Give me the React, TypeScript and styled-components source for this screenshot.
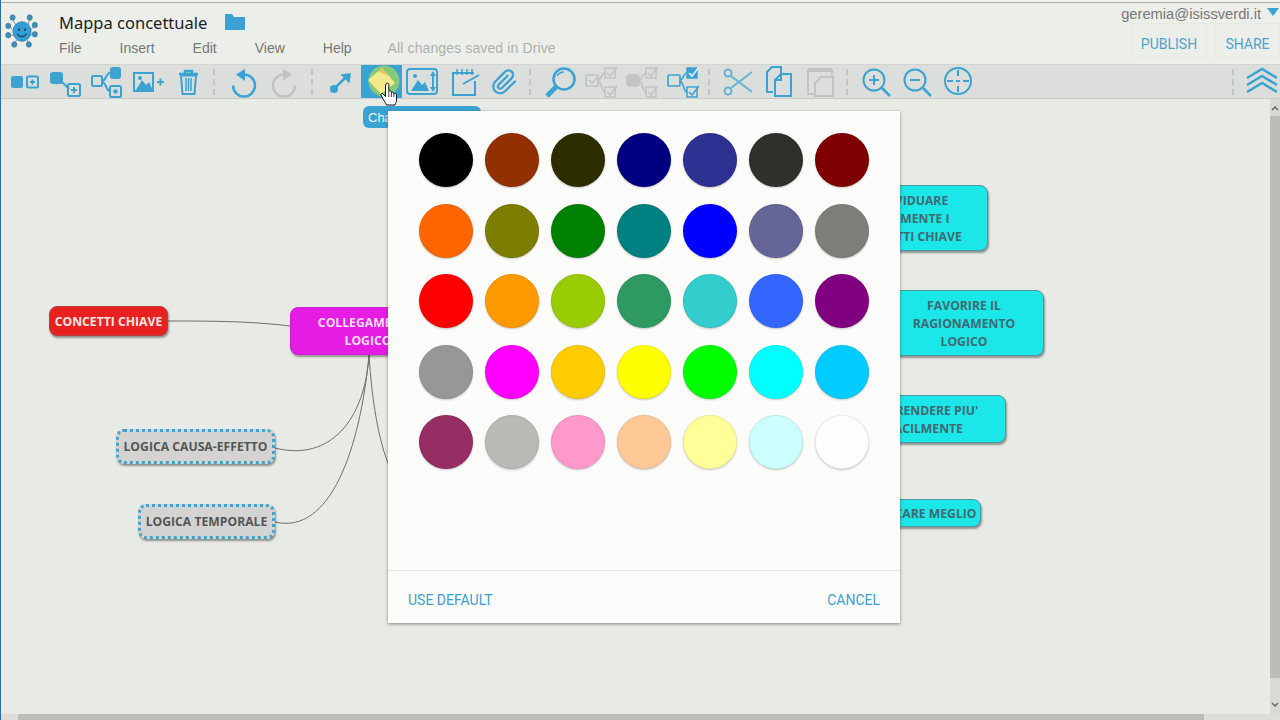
import React from 'react'
import styled, { createGlobalStyle } from 'styled-components'

const BLUE = '#3ba2d2'
const MUTED = '#c2c4c1'

const GlobalStyle = createGlobalStyle`
  html, body {
    margin: 0;
    padding: 0;
    background: #e8eae5;
    overflow: hidden;
  }
  * {
    box-sizing: border-box;
  }
`

const Page = styled.div`
  position: relative;
  display: flex;
  flex-direction: column;
  width: 1280px;
  height: 720px;
  overflow: hidden;
  border-left: 1px solid #2f6d99;
  background: #e8eae5;
  font-family: 'Liberation Sans', Arial, sans-serif;
`

const Header = styled.header`
  display: flex;
  flex: none;
  height: 64px;
  background: linear-gradient(#f0f1ed 2px, #a9aeae 2px, #a9aeae 3px, #eceee9 3px);
`

const LogoBox = styled.div`
  flex: none;
  width: 58px;
  padding: 12px 0 0 3px;

  svg {
    display: block;
  }
`

const TitleColumn = styled.div`
  display: flex;
  flex-direction: column;
  flex: 1;
  padding-top: 10px;
`

const TitleRow = styled.div`
  display: flex;
  align-items: center;
  gap: 18px;
  height: 24px;
`

const Title = styled.div`
  font-family: 'Noto Sans', sans-serif;
  font-size: 16.5px;
  color: #222;
`

const MenuRow = styled.nav`
  display: flex;
  align-items: center;
  gap: 38px;
  height: 18px;
  margin-top: 5px;
  font-size: 14px;
  color: #757775;
`

const SaveStatus = styled.span`
  margin-left: -2px;
  letter-spacing: 0.12px;
  color: #aeb0ae;
`

const AccountColumn = styled.div`
  display: flex;
  flex-direction: column;
  align-items: flex-end;
  padding-top: 5px;
`

const Account = styled.div`
  display: flex;
  align-items: center;
  gap: 6px;
  height: 18px;
  padding-right: 1px;
  font-size: 14.7px;
  color: #777;
`

const AccountCaret = styled.span`
  width: 0;
  height: 0;
  margin-top: -5px;
  border-left: 6px solid transparent;
  border-right: 6px solid transparent;
  border-top: 8px solid ${BLUE};
`

const HeaderActions = styled.div`
  display: flex;
  gap: 8px;
`

const HeaderButton = styled.div<{ $width: number }>`
  display: flex;
  align-items: center;
  justify-content: center;
  width: ${(props) => props.$width}px;
  height: 35px;
  padding-top: 6px;
  border: 1px solid #e6e8e3;
  font-family: Roboto, sans-serif;
  font-size: 14px;
  color: #4ba5c9;
`

const Toolbar = styled.div`
  display: flex;
  flex: none;
  align-items: center;
  height: 35px;
  padding-left: 4px;
  border-top: 1px solid #d2d4d1;
  border-bottom: 1px solid #c9cbc8;
  background: #dcdedb;
`

const ToolButton = styled.div<{ $active?: boolean; $width?: number }>`
  flex: none;
  width: ${(props) => props.$width || 41}px;
  height: 33px;
  background: ${(props) => (props.$active ? BLUE : 'transparent')};

  svg {
    display: block;
  }
`

const ToolSeparator = styled.span<{ $left: number; $right: number }>`
  flex: none;
  width: 2px;
  height: 26px;
  margin: 0 ${(props) => props.$right}px 0 ${(props) => props.$left}px;
  border-left: 2px dashed ${MUTED};
`

const ToolSpacer = styled.span`
  flex: 1;
`

const Workspace = styled.div`
  display: flex;
  flex: 1;
  min-height: 0;
`

const Stage = styled.main`
  position: relative;
  flex: 1;
  overflow: hidden;
  border-bottom-right-radius: 6px;
  background: #e8eae5;
`

const EdgeLayer = styled.svg`
  position: absolute;
  inset: 0;
  width: 100%;
  height: 100%;
`

type NodeKind = 'red' | 'magenta' | 'cyan' | 'dotted'

const nodeColors: Record<NodeKind, { bg: string; border: string; text: string; inset: number }> = {
  red: { bg: '#e8201f', border: '#b8403f', text: '#f6e6e4', inset: 2 },
  magenta: { bg: '#e41ce4', border: '#d020d0', text: '#f6dff2', inset: 2 },
  cyan: { bg: '#1be6e8', border: '#4a9a9f', text: '#3f6a70', inset: 2 },
  dotted: { bg: '#d3d4d1', border: '#43a3cc', text: '#555', inset: 0 },
}

const MapNode = styled.div<{ $kind: NodeKind; $x: number; $y: number; $w: number; $h: number }>`
  position: absolute;
  left: ${(props) => props.$x - 1}px;
  top: ${(props) => props.$y - 99}px;
  display: flex;
  align-items: center;
  justify-content: center;
  width: ${(props) => props.$w}px;
  height: ${(props) => props.$h}px;
  padding-top: ${(props) => nodeColors[props.$kind].inset}px;
  border: ${(props) => (props.$kind === 'dotted' ? '3px dotted' : '1px solid')} ${(props) => nodeColors[props.$kind].border};
  border-radius: 8px;
  box-shadow: 1px 2px 2px rgba(40, 40, 40, 0.45);
  background: ${(props) => nodeColors[props.$kind].bg};
  font-family: 'Open Sans', sans-serif;
  font-size: 12.2px;
  font-weight: 700;
  line-height: 18px;
  text-align: center;
  white-space: nowrap;
  color: ${(props) => nodeColors[props.$kind].text};
`

const VerticalScroll = styled.div`
  display: flex;
  flex: none;
  flex-direction: column;
  width: 10px;
  background: #d9dad6;
`

const ScrollArrow = styled.div<{ $height: number; $end?: boolean }>`
  display: flex;
  flex: none;
  align-items: ${(props) => (props.$end ? 'flex-end' : 'center')};
  justify-content: center;
  height: ${(props) => props.$height}px;
  padding-bottom: ${(props) => (props.$end ? 6 : 0)}px;
  color: #666;
`

const ScrollThumb = styled.div`
  flex: 1;
  background: #bcbdb7;
`

const HorizontalScroll = styled.div`
  display: flex;
  flex: none;
  height: 6px;
  padding-left: 17px;
  background: #dcddd9;
`

const HorizontalThumb = styled.div`
  flex: none;
  width: 1186px;
  background: #bcbdb7;
`

const Tooltip = styled.div`
  position: absolute;
  left: 362px;
  top: 106px;
  width: 118px;
  height: 22px;
  padding: 3px 5px;
  border-radius: 6px;
  background: ${BLUE};
  font-size: 13px;
  line-height: 17px;
  white-space: nowrap;
  color: #eef6fa;
`

const PointerBox = styled.div`
  position: absolute;
  left: 379px;
  top: 82px;
  width: 18px;
  height: 24px;

  svg {
    display: block;
  }
`

const ColorDialog = styled.section`
  position: absolute;
  left: 387px;
  top: 111px;
  display: flex;
  flex-direction: column;
  width: 512px;
  height: 512px;
  box-shadow: 0 1px 3px rgba(60, 60, 50, 0.6);
  background: #fbfcf9;
`

const SwatchGrid = styled.div`
  display: grid;
  flex: 1;
  grid-template-columns: repeat(7, 54px);
  grid-auto-rows: 54px;
  align-content: start;
  column-gap: 12px;
  row-gap: 16.5px;
  padding: 22px 0 0 31px;
`

const Swatch = styled.div<{ $color: string }>`
  border-radius: 50%;
  box-shadow: 0 1px 2px rgba(0, 0, 0, 0.22), inset 0 0 0 1px rgba(0, 0, 0, 0.07);
  background: ${(props) => props.$color};
`

const DialogFooter = styled.footer`
  display: flex;
  flex: none;
  align-items: center;
  justify-content: space-between;
  height: 53px;
  padding: 6px 20px 0;
  border-top: 1px solid #e4e5e2;
  font-family: Roboto, sans-serif;
  font-size: 14px;
  color: #3f9fca;
`

const swatches = [
  '#000000', '#923000', '#2d2e00', '#000080', '#2e3192', '#2e302c', '#7f0000',
  '#ff6600', '#7d7d00', '#008000', '#008080', '#0000ff', '#656598', '#7c7e7a',
  '#ff0000', '#ff9900', '#99cc00', '#2f9962', '#33cccc', '#3366ff', '#800080',
  '#969896', '#ff00ff', '#ffcc00', '#ffff00', '#00ff00', '#00ffff', '#00ccff',
  '#962e63', '#b9bab6', '#ff99cc', '#ffc896', '#ffff99', '#ccffff', '#fdfdfb',
]

const Tool = ({ children, active, width = 41 }: { children: React.ReactNode; active?: boolean; width?: number }) => (
  <ToolButton $active={active} $width={width}>
    <svg width={width} height={33} viewBox={`0 0 ${width} 33`} fill="none" stroke={BLUE} strokeWidth={2}>
      {children}
    </svg>
  </ToolButton>
)

const PlusBox = ({ x, y, size }: { x: number; y: number; size: number }) => (
  <>
    <rect x={x} y={y} width={size} height={size} rx={1.5} />
    <path d={`M${x + size / 2} ${y + 3}V${y + size - 3}M${x + 3} ${y + size / 2}H${x + size - 3}`} />
  </>
)

const CheckBox = ({ x, y, filled, color }: { x: number; y: number; filled?: boolean; color: string }) => (
  <>
    <rect x={x} y={y} width={10} height={10} fill={filled ? color : 'none'} stroke={color} strokeWidth={1.5} />
    <path d={`M${x + 2} ${y + 5}l3 3 7-9`} stroke={filled ? '#eef3f5' : color} strokeWidth={1.5} />
  </>
)

const CheckTree = ({ color, left, leftCheck, topFilled }: { color: string; left: 'outline' | 'filled'; leftCheck?: boolean; topFilled?: boolean }) => (
  <Tool>
    <g stroke={color} strokeWidth={1.7}>
      <rect x={5} y={10} width={12} height={11} rx={left === 'filled' ? 3 : 1} fill={left === 'filled' ? color : 'none'} />
      {leftCheck && <path d="M8 15l3 3 7-7" stroke={color} />}
      <path d="M17 15C21 15 20 8 24 8M17 16C21 16 20 27 24 27" />
    </g>
    <CheckBox x={24} y={3} color={color} filled={topFilled} />
    <CheckBox x={24} y={22} color={color} />
  </Tool>
)

const MagnifierZoom = ({ sign }: { sign: 'plus' | 'minus' }) => (
  <Tool>
    <circle cx={18} cy={15} r={10.5} />
    <path d="M26 23l8 8" strokeWidth={2.5} />
    <path d="M13 15H23" />
    {sign === 'plus' && <path d="M18 10V20" />}
  </Tool>
)

export default function App() {
  return (
    <Page>
      <GlobalStyle />
      <Header>
        <LogoBox>
          <svg width={36} height={39} viewBox="0 0 42 42" preserveAspectRatio="none" fill="none">
            <g stroke="#6f8792" strokeWidth={1}>
              <path d="M15 16L10 8M27 16L30 8M12 21L6 15M30 21L36 14M12 25L6 25M30 25L36 24M15 30L11 35M27 30L29 35" />
            </g>
            <g fill="#3a8fb8" stroke="#4a7c94" strokeWidth={0.8}>
              <circle cx={10} cy={6} r={3} />
              <circle cx={30} cy={6} r={3} />
              <circle cx={5} cy={15} r={3} />
              <circle cx={36} cy={14} r={3} />
              <circle cx={5} cy={25} r={3} />
              <circle cx={36} cy={24} r={3} />
              <circle cx={12} cy={35} r={3} />
              <circle cx={29} cy={35} r={3} />
            </g>
            <circle cx={21} cy={21} r={10.5} fill="#2f9fd6" stroke="#3b84aa" />
            <circle cx={17.5} cy={19} r={1.3} fill="#1d4050" />
            <circle cx={24.5} cy={19} r={1.3} fill="#1d4050" />
            <path d="M15.5 23.5C17.5 27.5 24 27.5 26 23.5" stroke="#1d4050" strokeWidth={1.3} />
          </svg>
        </LogoBox>
        <TitleColumn>
          <TitleRow>
            <Title>Mappa concettuale</Title>
            <svg width={20} height={16} viewBox="0 0 20 16">
              <path d="M0 1C0 .4.4 0 1 0H7L9 3H19C19.600 3 20 3.400 20 4V15C20 15.600 19.600 16 19 16H1C.4 16 0 15.600 0 15Z" fill={BLUE} />
            </svg>
          </TitleRow>
          <MenuRow>
            <span>File</span>
            <span>Insert</span>
            <span>Edit</span>
            <span>View</span>
            <span>Help</span>
            <SaveStatus>All changes saved in Drive</SaveStatus>
          </MenuRow>
        </TitleColumn>
        <AccountColumn>
          <Account>
            geremia@isissverdi.it
            <AccountCaret />
          </Account>
          <HeaderActions>
            <HeaderButton $width={76}>PUBLISH</HeaderButton>
            <HeaderButton $width={65}>SHARE</HeaderButton>
          </HeaderActions>
        </AccountColumn>
      </Header>

      <Toolbar>
        <Tool>
          <rect x={6} y={11} width={12} height={12} rx={2} fill={BLUE} stroke="none" />
          <PlusBox x={22} y={11.500} size={11} />
        </Tool>
        <Tool>
          <rect x={4} y={7} width={13} height={12} rx={3} fill={BLUE} stroke="none" />
          <path d="M15 16L23 24" />
          <PlusBox x={22} y={19} size={12} />
        </Tool>
        <Tool>
          <rect x={5} y={11} width={10} height={10} rx={1.5} />
          <rect x={23} y={2} width={11} height={12} rx={3} fill={BLUE} stroke="none" />
          <path d="M15 16C19 16 19 8 23 8M15 17C19 17 19 26 23 26" />
          <PlusBox x={23} y={21} size={11} />
        </Tool>
        <Tool>
          <rect x={6} y={8} width={19} height={18} />
          <path d="M8 25L14 15L18 20L21 17L25 25Z" fill={BLUE} stroke="none" />
          <circle cx={12} cy={13} r={2} fill={BLUE} stroke="none" />
          <path d="M29 17H36M32.500 13.500V20.500" />
        </Tool>
        <Tool>
          <path d="M10 9H29M16 8V6H23V8" strokeWidth={2.5} />
          <path d="M12 10.500L13.500 29H25.500L27 10.500Z" />
          <path d="M17 13V26M19.500 13V26M22 13V26" strokeWidth={1.5} />
        </Tool>
        <ToolSeparator $left={3} $right={8} />
        <Tool>
          <path d="M21 9.500A11 11 0 1 1 10 20.500" strokeWidth={2.5} />
          <path d="M22 4L13 9.500L22 16Z" fill={BLUE} stroke="none" />
        </Tool>
        <Tool>
          <g stroke={MUTED}>
            <path d="M20 9.500A11 11 0 1 0 31 20.500" strokeWidth={2.5} />
            <path d="M19 4L28 9.500L19 16Z" fill={MUTED} stroke="none" />
          </g>
        </Tool>
        <ToolSeparator $left={6} $right={7} />
        <Tool>
          <circle cx={14} cy={24} r={4} fill={BLUE} stroke="none" />
          <path d="M14 24L27 11" strokeWidth={2.5} />
          <path d="M31 8L20.500 9.500L29.500 18.500Z" fill={BLUE} stroke="none" />
        </Tool>
        <Tool active>
          <circle cx={23} cy={16} r={15.500} fill="#86c97a" stroke="none" />
          <path d="M7 15L21 3L34 18L20 29Z" fill="#f3ea8c" stroke="none" />
          <path d="M17 6.500L21 3L28 11Z" fill="#e0c36a" stroke="none" />
        </Tool>
        <Tool>
          <rect x={5} y={4} width={30} height={25} rx={3} />
          <path d="M9 26L16 15L20 20L23 17L27 26Z" fill={BLUE} stroke="none" />
          <circle cx={13} cy={11} r={2} fill={BLUE} stroke="none" />
          <path d="M31 10V23" />
          <path d="M31 6L28 11H34ZM31 27L28 22H34Z" fill={BLUE} stroke="none" />
        </Tool>
        <Tool>
          <path d="M32 16V30H10V8H31" />
          <path d="M14 4V10M19 4V10M24 4V10M29 4V10" strokeWidth={1.500} />
          <path d="M20 19L36 10" />
        </Tool>
        <Tool>
          <g transform="translate(7 3) scale(1.15)">
            <path d="m21.44 11.05-9.19 9.19a6 6 0 0 1-8.49-8.49l8.57-8.57A4 4 0 1 1 18 8.84l-8.59 8.57a2 2 0 0 1-2.83-2.83l8.49-8.48" />
          </g>
        </Tool>
        <ToolSeparator $left={4} $right={9} />
        <Tool>
          <circle cx={24} cy={14} r={10.500} strokeWidth={2.5} />
          <path d="M17 11A8 8 0 0 1 24 7" strokeWidth={1.500} />
          <path d="M16 22L7 31" strokeWidth={5} />
        </Tool>
        <CheckTree color={MUTED} left="outline" leftCheck />
        <CheckTree color={MUTED} left="filled" />
        <CheckTree color={BLUE} left="outline" topFilled />
        <ToolSeparator $left={4} $right={8} />
        <Tool>
          <g stroke="#66b1d4">
            <circle cx={10} cy={8} r={3.5} />
            <circle cx={10} cy={26} r={3.5} />
            <path d="M13 11L34 27M13 23L34 7" />
          </g>
        </Tool>
        <Tool>
          <path d="M14 27H8V7L13 2H22V8" />
          <path d="M16 31H32V9H22L16 15Z" />
          <path d="M22 9V15H16" />
        </Tool>
        <Tool>
          <g stroke={MUTED}>
            <path d="M8 5H32" strokeWidth={4} />
            <path d="M8 5V29H15M32 5V10" />
            <path d="M15 31H33V12H21L15 18Z" />
          </g>
        </Tool>
        <ToolSeparator $left={5} $right={8} />
        <MagnifierZoom sign="plus" />
        <MagnifierZoom sign="minus" />
        <Tool>
          <circle cx={20} cy={16} r={13} />
          <path d="M20 5V11M20 21V27M9 16H15M25 16H31M18 16H22" />
        </Tool>
        <ToolSpacer />
        <ToolSeparator $left={0} $right={8} />
        <Tool width={38}>
          <path d="M5 13L20 4L35 13M5 20L20 11L35 20M5 27L20 18L35 27" strokeWidth={2.5} />
        </Tool>
      </Toolbar>

      <Workspace>
        <Stage>
          <EdgeLayer viewBox="1 99 1269 615" fill="none" stroke="#6e706c" strokeWidth={1}>
            <path d="M168 321C210 321 250 321 290 326" />
            <path d="M275 448C330 462 365 420 369 355" />
            <path d="M275 522C330 535 360 450 369 355" />
            <path d="M369 355C372 400 378 440 390 468" />
          </EdgeLayer>
          <MapNode $kind="red" $x={49} $y={306} $w={119} $h={30}>CONCETTI CHIAVE</MapNode>
          <MapNode $kind="magenta" $x={290} $y={307} $w={156} $h={48}>COLLEGAMENTO<br />LOGICO</MapNode>
          <MapNode $kind="dotted" $x={116} $y={429} $w={159} $h={35}>LOGICA CAUSA-EFFETTO</MapNode>
          <MapNode $kind="dotted" $x={138} $y={504} $w={137} $h={35}>LOGICA TEMPORALE</MapNode>
          <MapNode $kind="cyan" $x={828} $y={185} $w={160} $h={66}>INDIVIDUARE<br />FACILMENTE I<br />CONCETTI CHIAVE</MapNode>
          <MapNode $kind="cyan" $x={884} $y={290} $w={160} $h={66}>FAVORIRE IL<br />RAGIONAMENTO<br />LOGICO</MapNode>
          <MapNode $kind="cyan" $x={844} $y={395} $w={162} $h={48}>APPRENDERE PIU'<br />FACILMENTE</MapNode>
          <MapNode $kind="cyan" $x={838} $y={499} $w={143} $h={28}>COMUNICARE MEGLIO</MapNode>
        </Stage>
        <VerticalScroll>
          <ScrollArrow $height={17}>
            <svg width={8} height={6} viewBox="0 0 8 6" fill="none" stroke="currentColor" strokeWidth={1.5}><path d="M1 5L4 2L7 5" /></svg>
          </ScrollArrow>
          <ScrollThumb />
          <ScrollArrow $height={36} $end>
            <svg width={8} height={6} viewBox="0 0 8 6" fill="none" stroke="currentColor" strokeWidth={1.5}><path d="M1 1L4 4L7 1" /></svg>
          </ScrollArrow>
        </VerticalScroll>
      </Workspace>
      <HorizontalScroll>
        <HorizontalThumb />
      </HorizontalScroll>

      <Tooltip>Change node color</Tooltip>
      <PointerBox>
        <svg width={18} height={24} viewBox="0 0 18 24" fill="#fff" stroke="#111" strokeWidth={1}>
          <path d="M6 2C6.800 .8 8.500 .8 8.800 2.500V9.500C9.300 8.500 11 8.500 11.400 9.800V10.800C12 9.800 13.600 10 13.900 11.300V12C14.500 11.200 16.400 11.400 16.500 12.800V18C16.500 20 15.500 21 15 23H6.500C6 21 4.500 19.500 3 17L1 13C.5 11.800 2 10.800 3 11.800L5.500 14.500V3Z" />
          <path d="M8.800 10V15M11.400 11V15M13.900 12V15" strokeWidth={0.8} />
        </svg>
      </PointerBox>

      <ColorDialog>
        <SwatchGrid>
          {swatches.map((color) => (
            <Swatch key={color} $color={color} />
          ))}
        </SwatchGrid>
        <DialogFooter>
          <span>USE DEFAULT</span>
          <span>CANCEL</span>
        </DialogFooter>
      </ColorDialog>
    </Page>
  )
}
